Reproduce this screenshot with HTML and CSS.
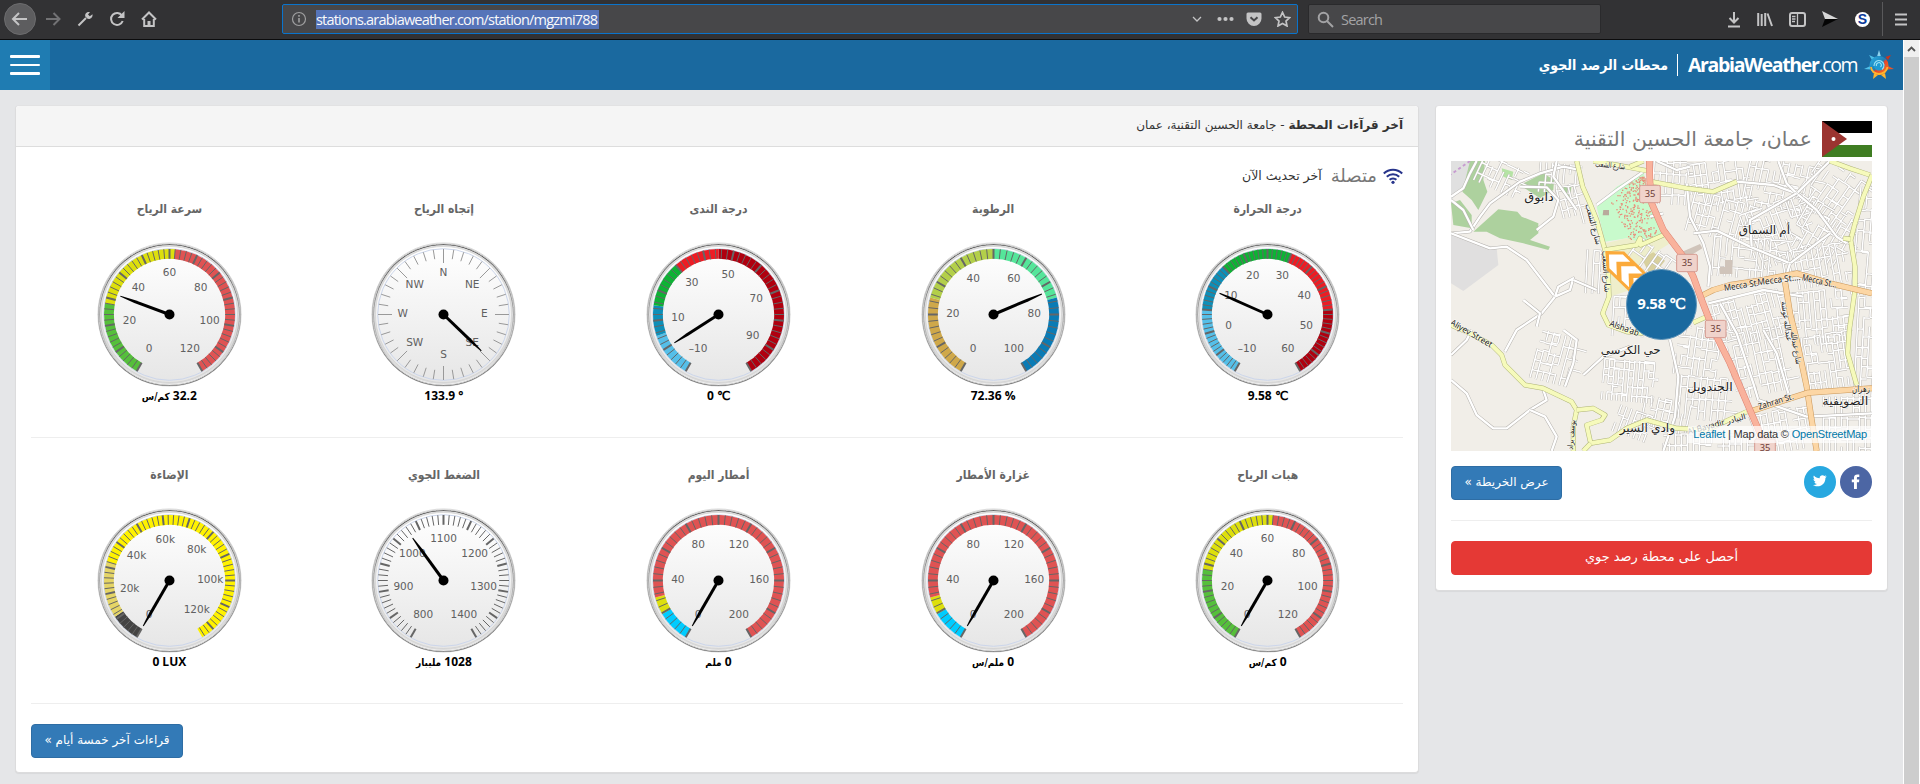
FILE: index.html
```html
<!DOCTYPE html>
<html lang="ar">
<head>
<meta charset="utf-8">
<title>ArabiaWeather</title>
<link rel="stylesheet" href="styles.css">
</head>
<body>
<div class="browser">
  <span class="back"><svg width="18" height="16" viewBox="0 0 18 16"><path d="M16 8H2M8 2L2 8l6 6" class="ln"/></svg></span>
  <svg class="b-ico i-fwd" width="16" height="16" viewBox="0 0 16 16"><path d="M1 8h13M8.500 2l6 6-6 6" class="ln dim"/></svg>
  <svg class="b-ico i-wrench" width="16" height="16" viewBox="0 0 16 16"><path d="M1.500 14.500L9 7" class="ln"/><path d="M15.500 3.200l-2.700 2L11 3.600 13 1c-3-.6-5.500 1.500-4.700 4.500l2.300 2.300c2.900.7 5.400-1.600 4.900-4.600z" class="fl"/></svg>
  <svg class="b-ico i-reload" width="16" height="16" viewBox="0 0 16 16"><path d="M13 4.500A6 6 0 1 0 13.700 10" class="ln"/><path d="M15.500 0v7h-7z" class="fl"/></svg>
  <svg class="b-ico i-home" width="16" height="16" viewBox="0 0 16 16"><path d="M1 8.500L8 1.500l7 7M3.200 8v7h9.600V8" class="ln"/><path d="M6.500 15v-5h3v5z" class="fl"/></svg>
  <div class="urlbar">
    <svg width="16" height="16" viewBox="0 0 16 16"><circle cx="8" cy="8" r="6.500" class="info"/><path d="M7.200 7h1.600v4.500H7.200zM7.200 4h1.600v1.700H7.200z" class="dimfl"/></svg>
    <span class="url">stations.arabiaweather.com/station/mgzmi788</span>
    <span class="url-icons">
      <svg width="10" height="8" viewBox="0 0 10 8"><path d="M1 2l4 4 4-4" class="ln thin"/></svg>
      <svg width="17" height="6" viewBox="0 0 17 6"><g class="fl"><circle cx="2.500" cy="3" r="2.100"/><circle cx="8.500" cy="3" r="2.100"/><circle cx="14.500" cy="3" r="2.100"/></g></svg>
      <svg width="16" height="15" viewBox="0 0 16 15"><path d="M2 .5h12A1.500 1.500 0 0 1 15.500 2v4.500a7.500 7.500 0 0 1-15 0V2A1.500 1.500 0 0 1 2 .5z" class="fl"/><path d="M4.500 5.200L8 8.500l3.500-3.300" fill="none" stroke="#474749" stroke-width="2"/></svg>
      <svg width="17" height="16" viewBox="0 0 17 16"><path d="M8.500 1.300l2.200 4.700 5 .6-3.700 3.400 1 5-4.500-2.500L4 15l1-5L1.300 6.600l5-.6z" class="ln mid"/></svg>
    </span>
  </div>
  <div class="search">
    <svg width="17" height="17" viewBox="0 0 17 17"><circle cx="6.500" cy="6.500" r="4.800" class="ln"/><path d="M10 10l6 6" class="ln"/></svg>
    <span>Search</span>
  </div>
  <div class="tools">
    <svg width="14" height="17" viewBox="0 0 14 17"><path d="M7 1v10M2.500 7L7 11.500 11.500 7M1 15.500h12" class="ln"/></svg>
    <svg width="16" height="15" viewBox="0 0 16 15"><path d="M1.200 1v13M4.700 2v12M8.200 1v13M10.500 1.500L15 14" class="ln"/></svg>
    <svg width="17" height="15" viewBox="0 0 17 15"><rect x="1" y="1" width="15" height="13" rx="2" class="ln"/><path d="M8.500 1v13M3 4.500h3.500M3 7h3.500M3 9.500h3" class="ln thin"/></svg>
    <svg width="16" height="16" viewBox="0 0 16 16"><path d="M0 0l16 8H3z" fill="#d8d8d8"/><path d="M3 8h13L0 16z" fill="#050505"/></svg>
    <span class="s-badge">S</span>
    <i class="divider"></i>
    <svg width="12" height="13" viewBox="0 0 12 13"><path d="M0 1.500h12M0 6.500h12M0 11.500h12" class="ln"/></svg>
  </div>
</div>

<div class="viewport">
  <div class="page">
    <header class="top">
      <div class="menu"><i></i><i></i><i></i></div>
      <div class="brand" dir="rtl">
        <svg class="sun" width="30" height="30" viewBox="0 0 30 30">
          <defs><linearGradient id="sg" x1="0" y1="0" x2="1" y2="1"><stop offset="0" stop-color="#2fb4e8"/><stop offset=".48" stop-color="#1b7fb8"/><stop offset=".55" stop-color="#e8442a"/><stop offset="1" stop-color="#f6861f"/></linearGradient></defs>
          <path d="M15 0l1.800 6h-3.600z" fill="#8fd3ee"/><path d="M5 5l5.500 2.500L8 10z" fill="#4fc0e8"/><path d="M0 19l6.500-3v3.500z" fill="#4fc0e8"/>
          <path d="M27 5l-5.500 2L24 10z" fill="#c8361f"/><path d="M30 19l-6-3-.5 3.500z" fill="#e8562a"/>
          <path d="M9 29l1-6 4 2zM22 29l-1-6-4 2z" fill="#ffb52e"/>
          <circle cx="15" cy="15.500" r="9.500" fill="url(#sg)"/>
          <path d="M7 17c0 4 4 7 8 7s8-3 8.500-7" fill="none" stroke="#ffb52e" stroke-width="1.800"/>
          <circle cx="15" cy="15" r="5.500" fill="#1f9ad2"/>
          <path d="M10 16a5 5 0 1 1 8 3.500M12.500 16a2.500 2.500 0 1 1 4 1" fill="none" stroke="#9be0f5" stroke-width="1.100"/>
        </svg>
        <span class="logo" dir="ltr"><b>ArabiaWeather</b>.com</span>
        <i class="bar"></i>
        <span class="tag">محطات الرصد الجوي</span>
      </div>
    </header>
    <main class="cols" dir="rtl">
      <aside class="card side">
        <div class="place">
          <svg width="50" height="36" viewBox="0 0 50 36"><path fill="#fff" d="M0 0h50v36H0z"/><path d="M0 0h50v12H0z"/><path fill="#3f7d22" d="M0 24h50v12H0z"/><path fill="#9b3430" d="M0 0l25 18L0 36z"/><circle cx="11.500" cy="18" r="2" fill="#fff"/></svg>
          <span>عمان، جامعة الحسين التقنية</span>
        </div>
        <div class="map" dir="ltr">
          <svg id="map" width="421" height="290" viewBox="63 183 1263 870"></svg>
          <span class="temp">9.58 ℃</span>
          <span class="attr"><a>Leaflet</a> | Map data © <a>OpenStreetMap</a></span>
        </div>
        <div class="actions">
          <span class="social">
            <i class="fb"><svg width="10" height="15" viewBox="0 0 10 15"><path d="M3 15V8.200H.8V5.500H3V3.600C3 1.300 4.300.4 6.300.4h2v2.500H7c-.9 0-1.100.4-1.100 1.100v1.500h2.400L8 8.200H5.900V15z" fill="#fff"/></svg></i>
            <i class="tw"><svg width="14" height="12" viewBox="0 0 14 12"><path d="M13.800 1.500l-1.400 1.600C12.600 8 8.500 11.800 3.800 11.300 2.400 11.200 1 10.700.1 10c1.400.1 2.800-.3 3.900-1.100-1.200-.1-2.200-.9-2.600-2l1.200-.1C1.300 6.400.5 5.300.5 4l1.200.4C.5 3.400.1 2 .9.500 2.300 2.200 4.300 3.200 6.700 3.300 6.300.8 9.400-.8 11.500 1l1.700-.7-1.100 1.500z" fill="#fff"/></svg></i>
          </span>
          <a class="btn b-map"><span>عرض الخريطة »</span></a>
        </div>
        <div class="rule"></div>
        <a class="btn red"><span>أحصل على محطة رصد جوي</span></a>
      </aside>
      <section class="card main">
        <div class="head"><b>آخر قرآءات المحطة</b> - جامعة الحسين التقنية، عمان</div>
        <div class="body">
          <div class="status">
            <svg width="20" height="16" viewBox="0 0 20 16"><g fill="none" stroke="#27348b" stroke-width="2"><path d="M.8 5.500a13 13 0 0 1 18.400 0"/><path d="M3.800 8.800a8.800 8.800 0 0 1 12.400 0"/><path d="M6.600 11.800a4.800 4.800 0 0 1 6.800 0"/></g><circle cx="10" cy="14.300" r="1.600" fill="#27348b"/></svg>
            <span class="online">متصلة</span><span class="upd">آخر تحديث الآن</span>
          </div>
          <div class="gauges" id="row1"></div>
          <div class="rule"></div>
          <div class="gauges" id="row2"></div>
          <div class="rule"></div>
          <div class="foot"><a class="btn b-days"><span>قراءات آخر خمسة أيام »</span></a></div>
        </div>
      </section>
    </main>
  </div>
  <div class="scroll"><span><svg width="9" height="6" viewBox="0 0 9 6"><path d="M1 5l3.500-3.500L8 5" fill="none" stroke="#555" stroke-width="1.800"/></svg></span><i></i></div>
</div>
<script src="app.js"></script>
</body>
</html>
```
FILE: styles.css
```css
* { box-sizing: border-box; }
body { margin: 0; height: 784px; overflow: hidden; background: #e5e6e8; font-family: "Noto Sans", "DejaVu Sans", sans-serif; color: #333; }
i { font-style: normal; }

/* browser toolbar */
.browser { height: 40px; background: #323234; border-bottom: 1px solid #0c0c0d; display: flex; align-items: center; padding-left: 4px; padding-bottom: 1px; }
.ln { fill: none; stroke: #c4c4c5; stroke-width: 2; }
.ln.dim { stroke: #727274; }
.ln.thin { stroke-width: 1.3; }
.ln.mid { stroke-width: 1.7; }
.fl { fill: #c4c4c5; }
.info { fill: none; stroke: #a0a0a1; stroke-width: 1.2; }
.dimfl { fill: #a0a0a1; }
.back { width: 32px; height: 32px; border-radius: 50%; background: #5d5d5f; border: 1px solid #6c6c6e; display: flex; align-items: center; justify-content: center; flex: none; }
.b-ico { flex: none; }
.i-fwd { margin-left: 9px; }
.i-wrench { margin-left: 16px; }
.i-reload { margin-left: 16px; }
.i-home { margin-left: 16px; }
.urlbar { margin-left: 125px; width: 1016px; height: 30px; border: 1px solid #0a74cc; background: #474749; border-radius: 2px; display: flex; align-items: center; padding: 0 6px 0 8px; flex: none; }
.url { margin-left: 9px; background: #5674b9; color: #f9f9fa; font: 14.5px/19px "Open Sans", sans-serif; letter-spacing: -0.8px; white-space: nowrap; width: 283px; }
.url-icons { margin-left: auto; display: flex; align-items: center; gap: 12px; }
.url-icons svg:first-child { margin-right: 3px; }
.search { margin-left: 10px; width: 293px; height: 30px; border: 1px solid #2a2a2c; background: #474749; border-radius: 2px; display: flex; align-items: center; padding-left: 8px; flex: none; color: #a3a3a5; font: 14.5px "Open Sans", sans-serif; letter-spacing: -.8px; gap: 7px; }
.search .ln { stroke: #a3a3a5; }
.tools { margin-left: auto; display: flex; align-items: center; padding-right: 13px; gap: 16px; }
.s-badge { width: 15px; height: 15px; border-radius: 50%; background: #fff; color: #0a3a9a; font: bold 14px/15px "Liberation Sans", sans-serif; text-align: center; margin-left: 1px; }
.divider { width: 1px; height: 34px; background: #59595b; margin: 0 -4px; }

/* page frame */
.viewport { display: flex; height: 744px; }
.page { flex: 1; }
.scroll { width: 17px; background: #fff; padding: 0 1px; }
.scroll span { height: 17px; background: #f0f0f0; display: flex; align-items: center; justify-content: center; }
.scroll i { display: block; height: 727px; background: #cdcdcd; }
.top { height: 50px; background: #1a699f; display: flex; justify-content: space-between; align-items: center; }
.menu { width: 50px; height: 50px; background: #1f7cb2; padding: 15px 10px; display: flex; flex-direction: column; gap: 6px; }
.menu i { height: 3px; background: #fff; border-radius: 1px; }
.brand { display: flex; align-items: center; color: #fff; padding-right: 9px; white-space: nowrap; }
.sun { flex: none; }
.logo { font: 19.5px/30px "Open Sans", sans-serif; width: 170px; margin-right: 6px; letter-spacing: -1.35px; }
.bar { width: 1px; height: 22px; background: #fff; margin: 0 10px 0 9px; }
.tag { font: bold 14px/24px "DejaVu Sans Condensed", "DejaVu Sans", sans-serif; }

.cols { display: flex; align-items: flex-start; gap: 16px; padding: 15px 15px 0; }
.card { background: #fff; border: 1px solid #dcdcdd; border-top-color: #e2e2e3; border-radius: 4px; box-shadow: 0 1px 1px rgba(0, 0, 0, .06); }
.rule { height: 1px; background: #eee; }
.side { width: 453px; height: 486px; padding: 15px; flex: none; }
.place { height: 40px; display: flex; align-items: flex-start; gap: 10px; color: #777; font: 20.4px/36px "DejaVu Sans", sans-serif; white-space: nowrap; }
.map { position: relative; width: 421px; height: 290px; overflow: hidden; background: #f1eee8; }
.map svg { display: block; }
.map text { font-family: "Noto Sans", "DejaVu Sans", sans-serif; text-anchor: middle; }
.map .names text { fill: #222; paint-order: stroke; stroke: #fff; stroke-opacity: .6; stroke-width: 4px; }
.map .route { fill: #6b3a35; }
.temp { position: absolute; left: 175px; top: 108px; width: 71px; height: 71px; border-radius: 50%; background: #1a699f; border: 1px solid #5e93b8; color: #fff; font: bold 15px/67px "Open Sans", sans-serif; letter-spacing: -.4px; text-align: center; }
.attr { position: absolute; right: 0; bottom: 8px; height: 17px; background: rgba(255, 255, 255, .7); padding: 0 5px; font: 11px/17px "Liberation Sans", sans-serif; letter-spacing: -.18px; color: #333; white-space: nowrap; }
.attr a { color: #0078a8; }
.actions { display: flex; justify-content: space-between; margin: 15px 0 20px; }
.social { display: flex; gap: 4px; }
.social i { width: 32px; height: 32px; border-radius: 50%; display: flex; align-items: center; justify-content: center; padding-bottom: 2px; }
.fb { background: #4c66a4; }
.tw { background: #28a8e0; }
.btn { display: flex; align-items: center; justify-content: center; height: 34px; border-radius: 4px; background: #337ab7; border: 1px solid #2e6da4; color: #fff; font: 12px/20px "DejaVu Sans", sans-serif; padding-bottom: 2px; white-space: nowrap; }
.b-map { width: 111px; }
.b-days { width: 152px; }
.red { background: #e53935; border-color: #e53935; margin-top: 20px; font-size: 12.9px; }

.main { flex: 1; height: 668px; }
.head { height: 41px; background: #f5f5f5; border-bottom: 1px solid #ddd; border-radius: 4px 4px 0 0; padding: 0 15px; font: 12px/38px "DejaVu Sans", sans-serif; }
.body { padding: 0 15px; }
.status { height: 44px; padding-top: 13px; display: flex; align-items: center; font: 12.5px/28px "DejaVu Sans", sans-serif; }
.online { font-size: 18px; color: #777; margin: 0 6px 0 9px; }
.gauges { display: grid; grid-template-columns: repeat(5, 1fr); height: 246px; margin: 0 -2px 0 1px; }
.rule + .gauges { margin-top: 19px; }
.gauge { display: flex; flex-direction: column; align-items: center; }
.gauge h4 { margin: 0; height: 51px; font: bold 12px/36px "DejaVu Sans Condensed", "DejaVu Sans", sans-serif; color: #666; }
.gauge svg { flex: none; }
.gauge text { font: 10.5px "DejaVu Sans", sans-serif; fill: #606060; text-anchor: middle; }
.gauge .val { font: bold 12px/17px "Open Sans", sans-serif; color: #000; }
.gauge .unit { font: bold 10px/17px "DejaVu Sans Condensed", "DejaVu Sans", sans-serif; }
.foot { margin-top: 20px; display: flex; justify-content: flex-end; }
```
FILE: app.js
```js
// ---------- gauges ----------
const G = '#55BF3B', Y = '#DDDF0D', R = '#DF5353';
const row1 = [
  { t: 'درجة الحرارة', v: '9.58 ℃', n: 9.58, a: -10, b: 60, lab: 10, maj: 5, min: 1, bands: [[-10, 5, '#55BFE8'], [5, 15, '#0D8FB8'], [15, 30, '#0DB234'], [30, 45, '#ED1C24'], [45, 60, '#B0000F']] },
  { t: 'الرطوبة', v: '72.36 %', n: 72.36, a: 0, b: 100, lab: 20, maj: 10, min: 2, bands: [[0, 25, '#CFA84A'], [25, 50, '#B3CF4A'], [50, 75, '#55E59A'], [75, 100, '#0A7BB5']] },
  { t: 'درجة الندى', v: '0 ℃', n: 0, a: -10, b: 100, lab: 20, maj: 10, min: 2, bands: [[-10, 5, '#55BFE8'], [5, 15, '#0D8FB8'], [15, 30, '#0DB234'], [30, 45, '#ED1C24'], [45, 100, '#B0000F']] },
  { t: 'إتجاه الرياح', v: '133.9 °', n: 133.9, a: 0, b: 360, compass: true, maj: 45, min: 9, bands: [] },
  { t: 'سرعة الرياح', v: '32.2', u: 'كم/س', n: 32.2, a: 0, b: 120, lab: 20, maj: 10, min: 2, bands: [[0, 28, G], [28, 62, Y], [62, 120, R]] }
];
const rain = [[0, 19.5, '#00CCFF'], [19.5, 30, Y], [30, 200, R]];
const row2 = [
  { t: 'هبات الرياح', v: '0', u: 'كم/س', n: 0, a: 0, b: 120, lab: 20, maj: 10, min: 2, bands: [[0, 28, G], [28, 62, Y], [62, 120, R]] },
  { t: 'غزارة الأمطار', v: '0', u: 'ملم/س', n: 0, a: 0, b: 200, lab: 40, maj: 20, min: 4, bands: rain },
  { t: 'أمطار اليوم', v: '0', u: 'ملم', n: 0, a: 0, b: 200, lab: 40, maj: 20, min: 4, bands: rain },
  { t: 'الضغط الجوي', v: '1028', u: 'مليبار', n: 1028, a: 800, b: 1400, lab: 100, maj: 50, min: 10, bands: [] },
  { t: 'الإضاءة', v: '0 LUX', n: 0, a: 0, b: 125, lab: 20, maj: 10, min: 2, k: true, bands: [[0, 11, '#444'], [11, 32, '#E5D566'], [32, 125, '#FFF200']] }
];

function pt(r, deg) {
  const q = deg * Math.PI / 180;
  return (r * Math.sin(q)).toFixed(2) + ' ' + (-r * Math.cos(q)).toFixed(2);
}

function gauge(g, id) {
  const ang = v => g.compass ? v : -150 + (v - g.a) / (g.b - g.a) * 300;
  let s = `<defs><linearGradient id="a${id}" x2="0" y2="1"><stop stop-color="#fff"/><stop offset="1" stop-color="#333"/></linearGradient>
  <linearGradient id="b${id}" x2="0" y2="1"><stop stop-color="#333"/><stop offset="1" stop-color="#fff"/></linearGradient>
  <linearGradient id="c${id}" x2="0" y2="1"><stop stop-color="#fff"/><stop offset="1" stop-color="#e6e6e6"/></linearGradient></defs>
  <circle r="71.600" fill="url(#a${id})" stroke="#bbb" stroke-width=".5"/><circle r="70.600" fill="url(#b${id})" stroke="#ccc" stroke-width="1"/>
  <circle r="69.500" fill="#ddd"/><circle r="68" fill="url(#c${id})" stroke="#ccc" stroke-width=".6"/>
  <circle r="65.800" fill="none" stroke="#ccd6eb" stroke-width="1"/>`;
  for (const [f, t, c] of g.bands) {
    const A = ang(f), B = ang(t), big = B - A > 180 ? 1 : 0;
    s += `<path d="M${pt(65.500, A)}A65.500 65.500 0 ${big} 1 ${pt(65.500, B)}L${pt(55.700, B)}A55.700 55.700 0 ${big} 0 ${pt(55.700, A)}z" fill="${c}"/>`;
  }
  for (let v = g.a; v <= g.b + .001; v += g.min) {
    if (g.compass && v === 360) break;
    const major = Math.abs((v - g.a) % g.maj) < .01;
    const inner = g.compass ? (major ? 51.500 : 56) : 55.700;
    const w = g.compass ? 1 : (major ? 2 : 1);
    s += `<path d="M${pt(65.500, ang(v))}L${pt(inner, ang(v))}" stroke="${g.compass ? '#999' : '#666'}" stroke-width="${w}"/>`;
  }
  const names = ['N', 'NE', 'E', 'SE', 'S', 'SW', 'W', 'NW'];
  const step = g.compass ? 45 : g.lab;
  for (let v = g.a, i = 0; v <= g.b; v += step, i++) {
    if (g.compass && i > 7) break;
    const [x, y] = pt(40.700, ang(v)).split(' ').map(Number);
    const label = g.compass ? names[i] : String(v).replace('-', '–') + (g.k && v ? 'k' : '');
    s += `<text x="${x}" y="${y + 2.600}">${label}</text>`;
  }
  s += `<path transform="rotate(${ang(g.n)})" d="M-1.500 0V-37L-.5 -52.500H.5L1.500 -37V0z"/><circle r="5"/>`;
  const val = g.u ? `<span class="val" dir="rtl">${g.v} <span class="unit">${g.u}</span></span>` : `<span class="val" dir="ltr">${g.v}</span>`;
  return `<div class="gauge"><h4>${g.t}</h4><svg direction="ltr" width="145" height="145" viewBox="-72.500 -72.500 145 145">${s}</svg>${val}</div>`;
}
row1.forEach((g, i) => document.getElementById('row1').insertAdjacentHTML('beforeend', gauge(g, 'r' + i)));
row2.forEach((g, i) => document.getElementById('row2').insertAdjacentHTML('beforeend', gauge(g, 's' + i)));

// ---------- street map ----------
let seed = 7;
const rnd = () => (seed = (seed * 16807) % 2147483647) / 2147483647;
const poly = (p, c) => `<polygon points="${p}" fill="${c}"/>`;
const road = (p, w, c, edge) => `<polyline points="${p}" stroke="${edge}" stroke-width="${w + 3}"/><polyline points="${p}" stroke="${c}" stroke-width="${w}"/>`;

// small irregular street grids: x, y, width, height, rotation, spacing
const blocks = [
  [670, 183, 110, 110, 3, 26], [780, 183, 170, 130, -8, 24], [950, 183, 200, 130, 12, 26], [1130, 200, 170, 130, 35, 26],
  [780, 290, 170, 120, 15, 25], [950, 310, 180, 160, -20, 24], [1100, 320, 170, 150, 30, 26], [850, 410, 200, 110, 5, 25],
  [1060, 440, 190, 90, -10, 24], [1280, 260, 60, 300, 5, 26], [840, 590, 220, 110, -15, 22], [900, 690, 160, 180, -12, 26],
  [1090, 570, 160, 140, -5, 22], [1130, 700, 120, 160, -8, 22], [1280, 590, 60, 270, 3, 24], [1180, 890, 150, 150, 0, 24],
  [980, 930, 160, 120, -10, 25], [740, 680, 130, 140, 8, 24], [750, 830, 150, 120, 5, 26], [640, 900, 150, 80, 12, 26],
  [520, 780, 150, 110, 5, 20], [320, 700, 110, 130, 15, 24], [550, 590, 90, 90, 3, 24], [150, 183, 130, 60, 25, 24],
  [330, 190, 110, 60, 5, 24], [390, 260, 60, 90, -15, 24], [560, 930, 100, 70, 20, 22], [700, 1000, 260, 60, 0, 24],
  [470, 450, 55, 110, 3, 26], [600, 440, 120, 80, 35, 30]
];
let minor = '';
for (const [x, y, w, h, rot, sp] of blocks) {
  let d = '';
  for (let i = 0; i <= w; i += sp * .75)
    for (let j = 0; j <= h; j += sp * 1.250) {
      const X = x + i, Yy = y + j;
      if (rnd() < .8) d += `M${X.toFixed(0)} ${Yy.toFixed(0)}v${(sp * 1.250).toFixed(0)}`;
      if (rnd() < .62) d += `M${X.toFixed(0)} ${(Yy + rnd() * 8).toFixed(0)}h${(sp * .75 * (rnd() < .3 ? 2 : 1)).toFixed(0)}`;
    }
  minor += `<g transform="rotate(${rot} ${x + w / 2} ${y + h / 2})"><path d="${d}" stroke="#b6b3af" stroke-width="7"/><path d="${d}" stroke="#fff" stroke-width="4.500"/></g>`;
}
let dots = '';
for (let i = 0; i < 260; i++) {
  const y = 230 + rnd() * 190, left = y < 310 ? 610 - (y - 230) * .9 : 545 + (y - 310) * .5, right = 645 + Math.max(0, y - 290) * .32;
  dots += `<rect x="${(left + rnd() * (right - left)).toFixed(0)}" y="${y.toFixed(0)}" width="4" height="4"/>`;
}
const white = [
  '63,290 100,265 120,220 140,183', '63,400 120,395 150,350 180,310 270,245 330,220 400,200 440,208', '63,400 180,445 230,440 290,480 375,590 335,640 260,690 225,755',
  '375,590 385,560 430,535 420,570 375,590', '430,540 500,570', '63,840 110,880 140,945 190,985 230,985 300,930 350,900 340,870', '300,930 345,950 380,1010 365,1053', '63,765 110,720 125,690',
  '500,315 560,270 640,215', '770,250 780,350 820,430 840,500 835,560', '790,400 860,392 960,440 1080,490 1200,400', '920,245 1030,255 1100,280 1160,330 1220,410 1250,430',
  '1100,280 1200,183', '1045,183 1070,250 1100,280', '1100,280 960,360 965,440', '1080,490 1065,540', '835,610 1000,570 1120,590', '870,610 920,700 970,850 985,900', '1000,690 1040,760 1075,880',
  '720,720 745,830 735,950 700,1053', '680,183 740,210 780,200', '660,350 700,340', '270,260 350,262 385,300 370,350 320,390', '380,183 370,230 440,330', '405,860 430,790 440,720 400,690', '460,825 520,770 600,740',
  '63,300 100,330 130,390', '280,600 330,640 320,680', '985,900 1130,950 1326,940', '1000,1053 960,950'
];
const yellow = [
  '440,183 458,260 480,310 500,360 525,450 535,520 537,590 518,640 535,675 590,695 640,700', '525,450 620,435 630,415 632,435 700,405', '490,183 560,195 650,212', '600,200 640,183', '665,245 770,265 850,275 920,245',
  '1200,183 1260,205 1320,225', '1326,225 1300,290 1275,370 1262,420 1275,500 1275,570 1258,690 1253,760 1280,855', '1240,415 1262,418',
  '63,675 120,700 185,735 215,765 225,795 270,840 285,855 340,865 425,905 440,930 430,980 430,1053', '440,930 490,925 525,945 515,960 470,975 482,1030 540,1020 590,985 650,960 740,985 830,990 950,935', '790,668 830,650', '482,1030 460,1053'
];
const orange = ['810,590 850,570 900,555 1000,540 1100,520 1200,550 1326,580', '1065,545 1080,640 1100,720 1130,860 1145,960 1160,1053', '960,935 1050,905 1135,878 1326,865'];
const label = (x, y, t, w, size = 34, rot = 0) => `<text x="${x}" y="${y}" font-size="${size}" textLength="${w}" lengthAdjust="spacingAndGlyphs" transform="rotate(${rot} ${x} ${y})">${t}</text>`;
const shield = (x, y) => `<rect x="${x - 31}" y="${y - 26}" width="62" height="52" rx="5" fill="#f0d3cb" stroke="#d59a90" stroke-width="3"/><text x="${x}" y="${y + 10}" font-size="28" class="route">35</text>`;

document.getElementById('map').innerHTML = `
<rect x="63" y="183" width="1263" height="870" fill="#f1eee8"/>
${poly('63,183 125,183 105,260 63,300', '#e0e0e0')}${poly('63,400 200,445 205,495 100,573 63,550', '#e0dfdf')}
${poly('120,183 165,183 160,240 172,275 145,330 125,300 97,275', '#add19e')}${poly('63,310 90,300 125,345 125,385 70,375', '#add19e')}
${poly('270,255 340,220 372,240 370,270 330,295', '#add19e')}${poly('205,328 262,335 275,350 325,370 325,400 300,420 360,440 355,450 280,430 210,415 170,395 130,395', '#add19e')}
${poly('215,205 250,215 245,240 220,230', '#b5e3a5')}${poly('400,260 425,255 420,290 405,285', '#add19e')}
${poly('500,320 560,260 640,215 650,260 665,310 705,405 620,430 590,415 525,425', '#c8facc')}
${poly('525,430 590,415 630,425 700,405 720,430 640,480 600,570 540,590 535,470', '#eeeecb')}
${poly('520,330 537,330 537,346 518,346', '#b9a99c')}
<path d="M635 475l35-18 35 25-20 25-30 8z" fill="#d8d09e"/><g fill="#e8907c">${dots}</g>
<g fill="none" stroke-linejoin="round">${minor}</g>
${poly('885,480 907,480 907,522 870,522 870,500 885,500', '#d0c4ba')}${poly('750,458 810,432 817,445 768,475', '#d0c4ba')}
<g fill="none" stroke-linejoin="round">${white.map(p => road(p, 7, '#fff', '#b5b2ae')).join('')}
${yellow.map(p => road(p, 12, '#f6fabb', '#aeb377')).join('')}
${orange.map(p => road(p, 15, '#fcd6a4', '#c9975a')).join('')}
${road('658,183 660,250 665,310 700,390 760,470 790,530 815,600 850,690 900,790 960,930 990,1000 1010,1053', 17, '#f9b29c', '#dd8070')}
<path d="M120 183l-57 40" stroke="#c79bd0" stroke-width="6" stroke-dasharray="9 8"/></g>
<g class="names">${label(327, 304, 'دابوق', 88)}${label(1003, 402, 'أم السماق', 154)}${label(602, 762, 'حي الكرسي', 180)}${label(840, 872, 'الجندويل', 136)}${label(1246, 915, 'الصويفية', 138)}${label(652, 995, 'وادي السير', 166)}
${label(540, 204, 'شارع الشعب', 90, 24, 6)}${label(482, 375, 'شارع الشعب', 125, 24, 75)}${label(520, 515, 'شارع الشعب', 125, 24, 86)}
${label(580, 693, "Alsha'ab", 92, 26, 20)}${label(120, 708, 'Aliyev Street', 140, 26, 30)}${label(935, 565, 'Mecca St.', 104, 27, -9)}${label(1048, 548, 'Mecca St.…', 130, 27, -7)}${label(1166, 552, 'Mecca St…', 106, 27, 12)}
${label(1040, 913, 'Zahran St.', 110, 26, -17)}${label(862, 980, 'Al Bayadir البيادر', 180, 24, -15)}${label(1293, 877, 'زهران', 54, 26)}${label(1062, 665, 'عبدالله غوشة', 120, 24, 82)}${label(1090, 745, 'شارع عبدالله', 100, 24, 80)}${label(432, 1005, 'يوسف براد', 90, 24, -85)}</g>
${shield(660, 282)}${shield(771, 489)}${shield(857, 687)}${shield(1005, 1043)}
<g transform="translate(526 453) rotate(-46)"><path d="M0 0L38 42V190H-38V42z" fill="#fbaa3a"/><path d="M0 15L29 45V76L0 46L-29 76V45zM0 66L29 96V127L0 97L-29 127V96zM0 117L29 147V178L0 148L-29 178V147z" fill="#fff"/></g>`;
```
